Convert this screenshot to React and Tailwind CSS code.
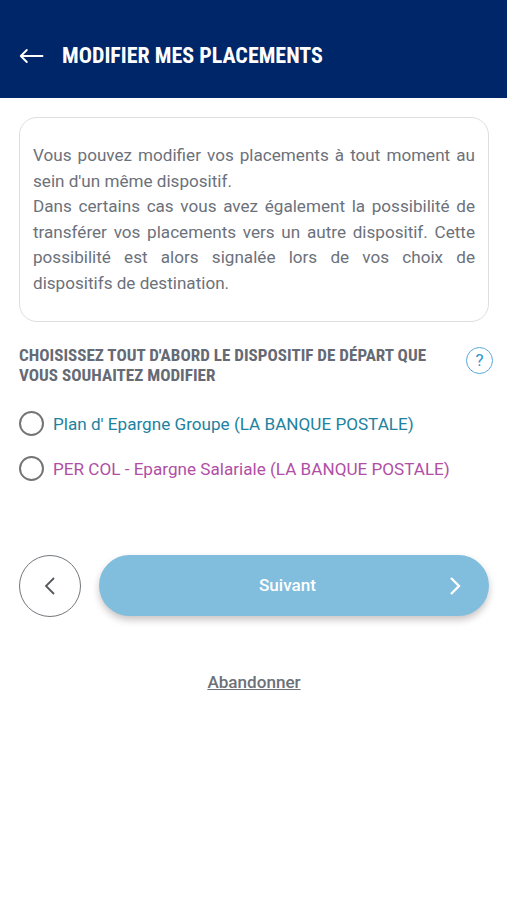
import React, { useState } from 'react';

const dispositifs = [
  { id: 'peg', label: "Plan d' Epargne Groupe (LA BANQUE POSTALE)", className: 'text-[#21829f]' },
  { id: 'percol', label: 'PER COL - Epargne Salariale (LA BANQUE POSTALE)', className: 'text-[#b04fa5]' },
];

const Header = () => (
  <header className="flex h-[98px] items-center bg-[#00266a] pt-[14px] pl-[19px] text-white">
    <svg width="25" height="16" viewBox="0 0 25 16" fill="none" stroke="currentColor" strokeWidth="1.9" strokeLinecap="round" strokeLinejoin="round">
      <path d="M23.5 8H1.8M7.8 2L1.8 8l6 6" />
    </svg>
    <h1 className="ml-[18px] text-[22px] leading-7 font-bold whitespace-nowrap font-stretch-75% font-['Roboto_Condensed',Roboto,sans-serif]">
      MODIFIER MES PLACEMENTS
    </h1>
  </header>
);

const InfoCard = () => (
  <div className="h-[205px] rounded-[18px] border-[1.5px] border-[#dedede] pt-[25px] pr-[13px] pl-[13px] text-justify text-[17.1px] leading-[25.6px] text-[#6c717b]">
    <p>Vous pouvez modifier vos placements à tout moment au sein d'un même dispositif.</p>
    <p>
      Dans certains cas vous avez également la possibilité de transférer vos placements vers un autre dispositif. Cette
      possibilité est alors signalée lors de vos choix de dispositifs de destination.
    </p>
  </div>
);

const App = () => {
  const [selected, setSelected] = useState(null);

  return (
    <div className="min-h-screen bg-white font-['Roboto',sans-serif]">
      <Header />
      <main className="pt-[19px] pr-[18px] pl-[19px]">
        <InfoCard />

        <div className="mt-[24px] flex items-start justify-between">
          <h2 className="text-[17.1px] leading-[19.5px] font-bold whitespace-nowrap text-[#656a74] font-stretch-75% font-['Roboto_Condensed',Roboto,sans-serif]">
            CHOISISSEZ TOUT D'ABORD LE DISPOSITIF DE DÉPART QUE
            <br />
            VOUS SOUHAITEZ MODIFIER
          </h2>
          <button
            type="button"
            className="mt-px -mr-[4px] flex size-[27px] shrink-0 items-center justify-center rounded-full border-[1.3px] border-[#55a9dd] text-[17px] text-[#2f94cf]"
          >
            ?
          </button>
        </div>

        <div className="mt-[26px] flex flex-col gap-5">
          {dispositifs.map((item) => (
            <button
              key={item.id}
              type="button"
              onClick={() => setSelected(item.id)}
              className="flex h-[25px] items-center text-[17.12px] leading-[25px]"
            >
              <span className="flex size-[25px] shrink-0 items-center justify-center rounded-full border-[2.4px] border-[#757575]">
                {selected === item.id && <span className="size-3 rounded-full bg-[#757575]" />}
              </span>
              <span className={`mt-px ml-[9px] whitespace-nowrap ${item.className}`}>{item.label}</span>
            </button>
          ))}
        </div>

        <div className="mt-[74px] flex items-center gap-[18px]">
          <button type="button" className="flex size-[62px] shrink-0 items-center justify-center rounded-full border-[1.3px] border-[#73777c] text-[#54585e]">
            <svg width="12" height="20" viewBox="0 0 12 20" fill="none" stroke="currentColor" strokeWidth="1.8">
              <path d="M10 2L2 10l8 8" />
            </svg>
          </button>
          <button
            type="button"
            className="-mt-px grid h-[61px] flex-1 grid-cols-[1fr_auto_1fr] items-center rounded-full bg-[#81bddd] pr-[27px] pl-[14px] text-[17.1px] font-medium text-white shadow-[0_4px_7px_rgba(60,40,40,0.27)]"
          >
            <span className="col-start-2">Suivant</span>
            <svg className="justify-self-end" width="14" height="20" viewBox="0 0 14 20" fill="none" stroke="currentColor" strokeWidth="2.3">
              <path d="M3 2l8 8-8 8" />
            </svg>
          </button>
        </div>

        <div className="mt-[53px] flex justify-center">
          <button type="button" className="text-[17.1px] leading-[25px] font-medium text-[#6c7177] underline">
            Abandonner
          </button>
        </div>
      </main>
    </div>
  );
};

export default App;
